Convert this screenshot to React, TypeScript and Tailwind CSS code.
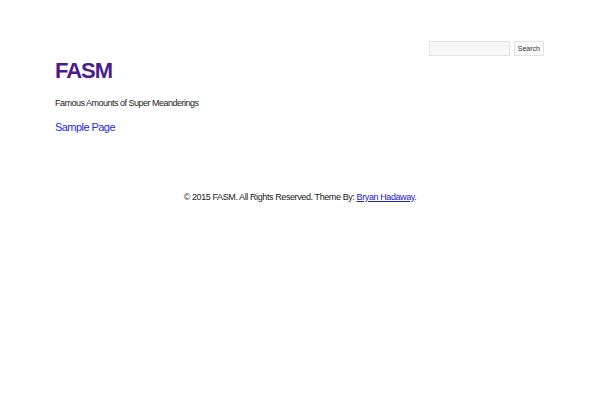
export default function App() {
  return (
    <div className="min-h-[400px] bg-white" style={{ fontFamily: '"Liberation Sans", Arial, sans-serif' }}>
      <div className="mx-[55px] pt-[41px]">
        <div className="flex justify-end pr-[1px]">
          <div className="flex items-center gap-[4px]">
            <div className="w-[81px] h-[15px] border border-[#e4e4e4] bg-[#f7f7f7]" />
            <div className="h-[15px] px-[3px] border border-[#e4e4e4] bg-[#fafafa] text-[7px] leading-[13px] text-[#333]">Search</div>
          </div>
        </div>
        <div className="mt-[1px] text-[22px] leading-[28px] font-bold tracking-[-1px] text-[#4b1a8c]">FASM</div>
        <div className="mt-[12px] text-[9px] leading-[12px] tracking-[-0.5px] text-[#222]">Famous Amounts of Super Meanderings</div>
        <div className="mt-[11px] text-[11px] leading-[14px] tracking-[-0.55px] text-[#1f2ad8]">Sample Page</div>
      </div>
      <div className="mt-[57px] text-center text-[9px] leading-[12px] tracking-[-0.4px] text-[#222]">
        © 2015 FASM. All Rights Reserved. Theme By: <a className="underline text-[#2020c8]">Bryan Hadaway</a>.
      </div>
    </div>
  );
}
